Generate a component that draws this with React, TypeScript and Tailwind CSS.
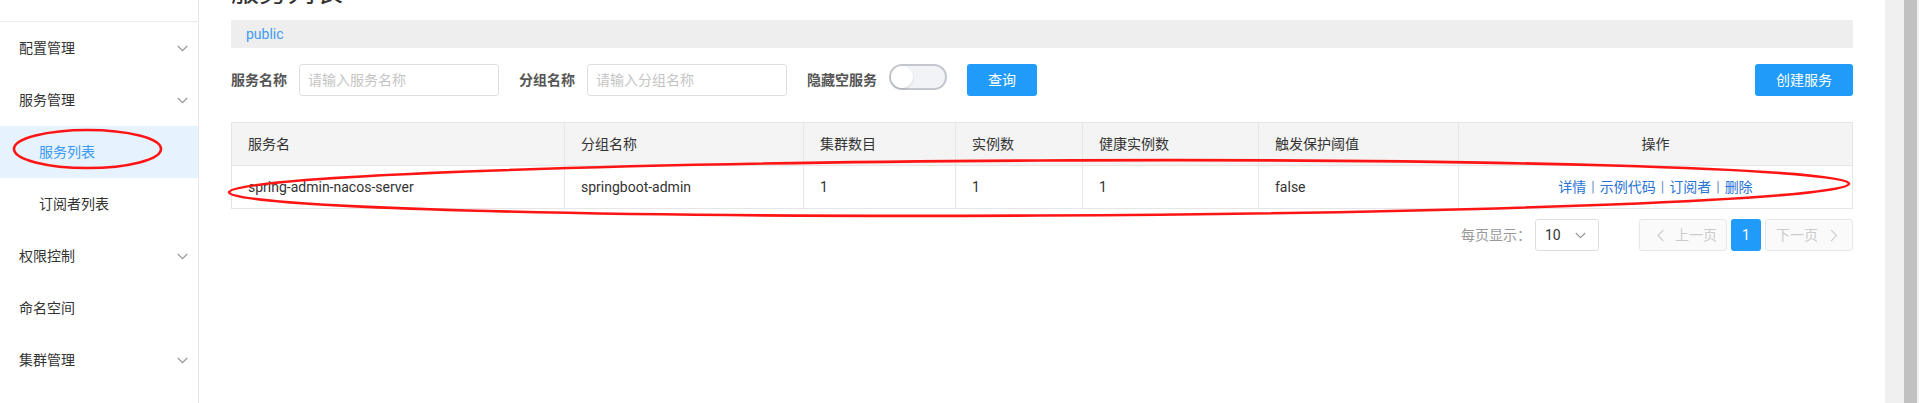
const menu = [
    { label: "配置管理", arrow: true },
    { label: "服务管理", arrow: true },
    { label: "服务列表", sub: true, active: true },
    { label: "订阅者列表", sub: true },
    { label: "权限控制", arrow: true },
    { label: "命名空间" },
    { label: "集群管理", arrow: true },
];

const columns = ["服务名", "分组名称", "集群数目", "实例数", "健康实例数", "触发保护阈值"];
const row = ["spring-admin-nacos-server", "springboot-admin", "1", "1", "1", "false"];
const actions = ["详情", "示例代码", "订阅者", "删除"];

function Chevron({ dir = "down", color = "#999" }: { dir?: "down" | "left" | "right"; color?: string }) {
    if (dir === "down") {
        return (
            <svg width="11" height="7" viewBox="0 0 11 7" fill="none">
                <polyline points="0.8,1 5.5,5.6 10.2,1" stroke={color} strokeWidth="1.2" />
            </svg>
        );
    }
    const pts = dir === "left" ? "6.5,0.8 1,6.5 6.5,12.2" : "1,0.8 6.5,6.5 1,12.2";
    return (
        <svg width="8" height="13" viewBox="0 0 8 13" fill="none">
            <polyline points={pts} stroke={color} strokeWidth="1.2" />
        </svg>
    );
}

export default function App() {
    return (
        <div className="relative w-[1919px] h-[403px] overflow-hidden flex bg-white text-[14px] text-[#333] font-[family-name:Roboto,'Noto_Sans_CJK_SC',sans-serif]">
            {/* sidebar */}
            <aside className="w-[199px] shrink-0 border-r border-[#e8e8e8] flex flex-col">
                <div className="h-[22px] border-b border-[#ececec]" />
                {menu.map((m) => (
                    <div
                        key={m.label}
                        className={`h-[52px] flex items-center justify-between pr-[10px] ${m.sub ? "pl-[39px]" : "pl-[19px]"} ${m.active ? "bg-[#e6f2fd] text-[#3a9af5]" : "text-[#333]"}`}
                    >
                        <span>{m.label}</span>
                        {m.arrow && <Chevron />}
                    </div>
                ))}
            </aside>

            {/* main */}
            <main className="flex-1 min-w-0 px-[32px]">
                <h1 className="mt-[-21px] text-[28px] leading-[28px] font-normal text-[#333]">服务列表</h1>
                <div className="mt-[13px] h-[28px] bg-[#eeeeee] pl-[15px] flex items-center text-[#3d9bf5]">public</div>

                <div className="mt-[16px] flex items-start">
                    <div className="flex items-center gap-[12px] mr-[20px]">
                        <span className="font-bold text-[#555] leading-[32px]">服务名称</span>
                        <div className="w-[200px] h-[32px] border border-[#dcdee3] rounded-[3px] px-[8px] flex items-center text-[#c4c4c4]">请输入服务名称</div>
                    </div>
                    <div className="flex items-center gap-[12px] mr-[20px]">
                        <span className="font-bold text-[#555] leading-[32px]">分组名称</span>
                        <div className="w-[200px] h-[32px] border border-[#dcdee3] rounded-[3px] px-[8px] flex items-center text-[#c4c4c4]">请输入分组名称</div>
                    </div>
                    <div className="flex items-start gap-[12px] mr-[20px]">
                        <span className="font-bold text-[#555] leading-[32px]">隐藏空服务</span>
                        <div className="relative w-[58px] h-[26px] rounded-full border-2 border-[#c4c6cf] bg-[#f2f3f7]">
                            <div className="absolute left-0 top-0 w-[22px] h-[22px] rounded-full bg-white shadow-[0_1px_2px_rgba(0,0,0,0.15)]" />
                        </div>
                    </div>
                    <button className="w-[70px] h-[32px] rounded-[3px] bg-[#209bfa] text-white">查询</button>
                    <button className="ml-auto w-[98px] h-[32px] rounded-[3px] bg-[#209bfa] text-white">创建服务</button>
                </div>

                {/* table */}
                <div className="mt-[26px] border border-[#e6e6e6]">
                    <div className="grid grid-cols-[332px_239px_152px_127px_176px_200px_1fr] h-[43px] bg-[#f4f4f4] border-b border-[#e6e6e6]">
                        {columns.map((c, i) => (
                            <div key={c} className={`flex items-center px-[16px] ${i > 0 ? "border-l border-[#e6e6e6]" : ""}`}>{c}</div>
                        ))}
                        <div className="flex items-center justify-center border-l border-[#e6e6e6]">操作</div>
                    </div>
                    <div className="grid grid-cols-[332px_239px_152px_127px_176px_200px_1fr] h-[42px]">
                        {row.map((c, i) => (
                            <div key={i} className={`flex items-center px-[16px] ${i > 0 ? "border-l border-[#e6e6e6]" : ""}`}>{c}</div>
                        ))}
                        <div className="flex items-center justify-center border-l border-[#e6e6e6] text-[#2a74d6]">
                            {actions.map((a, i) => (
                                <span key={a} className="flex items-center">
                                    {i > 0 && <span className="mx-[5px] text-[#6b8fc4]">|</span>}
                                    <span>{a}</span>
                                </span>
                            ))}
                        </div>
                    </div>
                </div>

                {/* pagination */}
                <div className="mt-[10px] flex items-center justify-end">
                    <span className="text-[#999] mr-[4px]">每页显示：</span>
                    <div className="w-[64px] h-[32px] border border-[#dcdee3] rounded-[3px] flex items-center justify-between pl-[9px] pr-[12px] text-[#333]">
                        <span>10</span>
                        <Chevron />
                    </div>
                    <div className="ml-[40px] w-[88px] h-[32px] border border-[#e6e7eb] bg-[#fafafa] rounded-[3px] flex items-center pl-[17px] text-[#ccc]">
                        <Chevron dir="left" color="#ccc" />
                        <span className="ml-[10px]">上一页</span>
                    </div>
                    <div className="ml-[4px] w-[30px] h-[32px] rounded-[3px] bg-[#209bfa] text-white flex items-center justify-center">1</div>
                    <div className="ml-[4px] w-[88px] h-[32px] border border-[#e6e7eb] bg-[#fafafa] rounded-[3px] flex items-center pl-[10px] text-[#ccc]">
                        <span>下一页</span>
                        <span className="ml-[12px]"><Chevron dir="right" color="#ccc" /></span>
                    </div>
                </div>
            </main>

            {/* scrollbar */}
            <div className="w-[34px] shrink-0 bg-[#f0f0f0] pl-[19px]">
                <div className="w-[13px] h-full bg-[#c1c1c1]" />
            </div>

            {/* red annotation marks */}
            <svg className="absolute inset-0 pointer-events-none" width="1919" height="403">
                <ellipse cx="87.5" cy="149" rx="73.5" ry="19" fill="none" stroke="#ff1414" strokeWidth="2.6" />
                <ellipse cx="1039" cy="188" rx="810" ry="27.5" fill="none" stroke="#ff1414" strokeWidth="2.6" transform="rotate(-0.3 1039 188)" />
            </svg>
        </div>
    );
}
